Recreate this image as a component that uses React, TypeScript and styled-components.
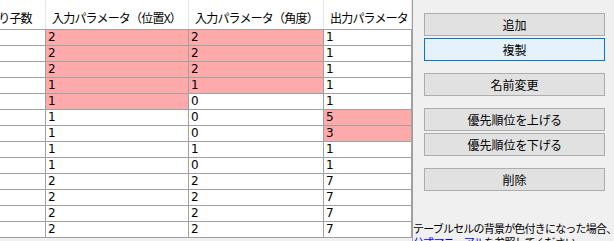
import styled, { createGlobalStyle } from "styled-components";

const GlobalStyle = createGlobalStyle`
  html, body {
    margin: 0;
    padding: 0;
    background: #f0f0f0;
  }
  body {
    font-family: "Noto Sans CJK JP", "Noto Sans", sans-serif;
  }
`;

const Window = styled.div`
  display: flex;
  width: 614px;
  height: 241px;
  overflow: hidden;
  background: #f0f0f0;
`;

const GridViewport = styled.div`
  width: 412px;
  height: 241px;
  flex-shrink: 0;
  overflow: hidden;
  border-right: 1px solid #a0a0a0;
  background: #f0f0f0;
`;

// margin-left stands in for the horizontal scroll position of the grid
const Grid = styled.div<{ $scroll: number }>`
  display: grid;
  grid-template-columns: ${(p) => 46 + p.$scroll}px 143px 135px 88px;
  margin-left: ${(p) => -p.$scroll}px;
  width: max-content;
`;

const HeaderCell = styled.div`
  box-sizing: border-box;
  height: 29px;
  padding: 6px 0 0 6px;
  display: flex;
  align-items: center;
  background: #ffffff;
  border-right: 1px solid #e5e5e5;
  font-size: 12px;
  letter-spacing: -0.8px;
  color: #000;
  white-space: nowrap;
  overflow: hidden;
`;

const HeaderRule = styled.div`
  grid-column: 1 / -1;
  height: 1px;
  background: #a0a0a0;
`;

const Cell = styled.div<{ $hot?: boolean }>`
  box-sizing: border-box;
  height: 16px;
  padding-left: 2px;
  background: ${(p) => (p.$hot ? "#ffaaaa" : "#ffffff")};
  border-right: 1px solid #a0a0a0;
  border-bottom: 1px solid #a0a0a0;
  font-family: "DejaVu Sans", sans-serif;
  font-size: 12px;
  line-height: 15px;
  color: #000;
`;

const Panel = styled.div`
  flex: 1;
  display: flex;
  flex-direction: column;
  overflow: hidden;
`;

const ButtonStack = styled.div`
  display: flex;
  flex-direction: column;
  padding: 13px 9px 0 11px;
`;

const Button = styled.button<{ $space: number; $focused?: boolean }>`
  box-sizing: border-box;
  height: 23px;
  margin: ${(p) => p.$space}px 0 0;
  padding: 0;
  border: 1px solid ${(p) => (p.$focused ? "#0078d7" : "#adadad")};
  background: ${(p) => (p.$focused ? "#e5f1fb" : "#e1e1e1")};
  font-family: "Noto Sans CJK JP", sans-serif;
  font-feature-settings: "palt";
  font-size: 12px;
  line-height: 21px;
  color: #000;
  text-align: center;
`;

const Note = styled.div`
  margin-top: 30px;
  font-size: 11px;
  letter-spacing: -0.8px;
  line-height: 14px;
  color: #000;
  white-space: nowrap;
`;

const Link = styled.span`
  color: #0000ff;
`;

const headers = ["振り子数", "入力パラメータ（位置X）", "入力パラメータ（角度）", "出力パラメータ"];

type Row = { x: number; angle: number; out: number; hx?: boolean; ha?: boolean; ho?: boolean };

const rows: Row[] = [
  { x: 2, angle: 2, out: 1, hx: true, ha: true },
  { x: 2, angle: 2, out: 1, hx: true, ha: true },
  { x: 2, angle: 2, out: 1, hx: true, ha: true },
  { x: 1, angle: 1, out: 1, hx: true, ha: true },
  { x: 1, angle: 0, out: 1, hx: true },
  { x: 1, angle: 0, out: 5, ho: true },
  { x: 1, angle: 0, out: 3, ho: true },
  { x: 1, angle: 1, out: 1 },
  { x: 1, angle: 0, out: 1 },
  { x: 2, angle: 2, out: 7 },
  { x: 2, angle: 2, out: 7 },
  { x: 2, angle: 2, out: 7 },
  { x: 2, angle: 2, out: 7 },
];

const buttons = [
  { label: "追加", space: 0 },
  { label: "複製", space: 2, focused: true },
  { label: "名前変更", space: 12 },
  { label: "優先順位を上げる", space: 12 },
  { label: "優先順位を下げる", space: 2 },
  { label: "削除", space: 12 },
];

export default function App() {
  return (
    <>
      <GlobalStyle />
      <Window>
        <GridViewport>
          <Grid $scroll={19}>
            {headers.map((h) => (
              <HeaderCell key={h}>{h}</HeaderCell>
            ))}
            <HeaderRule />
            {rows.map((r, i) => [
              <Cell key={`c${i}`} />,
              <Cell key={`x${i}`} $hot={r.hx}>{r.x}</Cell>,
              <Cell key={`a${i}`} $hot={r.ha}>{r.angle}</Cell>,
              <Cell key={`o${i}`} $hot={r.ho}>{r.out}</Cell>,
            ])}
          </Grid>
        </GridViewport>
        <Panel>
          <ButtonStack>
            {buttons.map((b) => (
              <Button key={b.label} $space={b.space} $focused={b.focused}>
                {b.label}
              </Button>
            ))}
          </ButtonStack>
          <Note>
            テーブルセルの背景が色付きになった場合、
            <br />
            <Link>公式マニュアル</Link>を参照してください。
          </Note>
        </Panel>
      </Window>
    </>
  );
}
